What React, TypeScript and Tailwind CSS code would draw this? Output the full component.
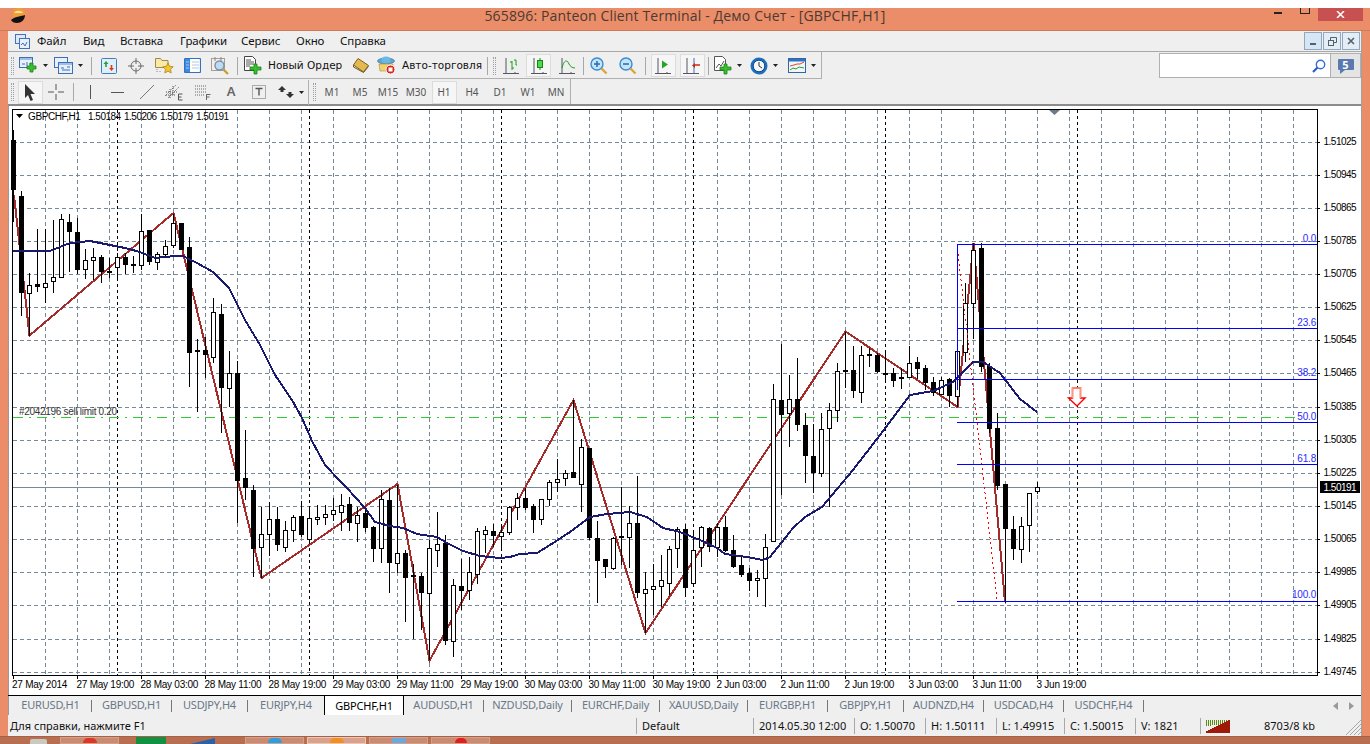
import React from "react";

type C = [number, number, number, number, number];
// high, body top, body bottom, low, bull(1=white)
const candles: C[] = [
[130,140,190,222,0],[191,196,293,316,0],[273,285,293,336,1],[229,284,287,292,0],[229,283,287,303,1],[220,277,281,293,1],[214,219,277,277,1],[214,222,232,272,0],[218,232,270,274,0],[249,260,269,279,1],[248,257,260,280,1],[255,257,272,283,0],[258,271,273,278,0],[253,257,267,280,1],[253,257,265,274,0],[256,264,266,273,0],[214,231,265,270,1],[230,230,262,265,0],[252,254,262,270,1],[240,246,254,257,1],[214,223,245,248,1],[223,223,250,250,0],[237,247,353,387,0],[339,350,352,412,0],[337,350,355,378,0],[298,312,357,363,1],[304,314,388,433,0],[351,373,388,407,1],[361,373,481,523,0],[430,478,488,500,0],[485,490,549,577,0],[507,534,547,578,1],[502,519,534,556,1],[507,519,545,551,0],[521,530,547,552,1],[515,517,530,542,1],[501,516,535,537,0],[509,518,539,543,1],[505,517,519,525,1],[505,514,517,525,1],[498,510,514,521,1],[494,505,512,531,1],[497,504,523,531,0],[507,515,523,542,1],[507,513,528,532,0],[526,527,549,562,0],[490,499,548,563,1],[488,500,563,593,0],[485,553,563,573,1],[550,553,578,622,0],[564,575,577,639,0],[573,576,593,630,0],[540,548,593,660,1],[512,544,550,567,1],[535,543,641,645,0],[579,585,641,657,1],[559,586,591,610,0],[557,572,590,600,1],[528,531,574,584,1],[526,530,534,553,1],[524,531,536,547,0],[527,532,536,550,1],[506,507,532,535,1],[493,498,507,520,1],[488,498,508,510,0],[504,506,520,533,0],[499,499,519,525,1],[480,482,499,506,1],[459,479,482,492,1],[470,473,478,486,1],[400,472,478,478,0],[439,447,484,512,1],[448,448,538,540,0],[521,538,561,603,0],[559,559,567,578,0],[537,538,568,570,1],[487,536,538,565,0],[506,523,537,568,1],[476,523,593,598,0],[572,589,593,633,1],[564,586,589,615,1],[555,580,586,607,1],[546,549,583,595,1],[527,529,548,568,1],[524,529,588,597,0],[530,550,583,583,1],[526,527,547,567,1],[527,528,547,552,0],[523,527,547,557,1],[516,527,551,552,0],[535,550,567,568,0],[557,565,575,577,0],[568,573,581,591,0],[570,578,580,597,1],[534,547,578,607,1],[384,399,541,541,1],[344,400,415,495,0],[375,399,413,447,1],[358,399,425,431,0],[413,425,456,483,0],[424,456,473,493,0],[413,429,473,477,1],[403,410,428,507,1],[363,371,410,422,1],[332,370,372,388,0],[346,370,391,398,0],[346,355,392,403,1],[348,354,356,367,0],[353,355,372,373,0],[353,373,374,383,0],[368,373,381,387,0],[368,377,379,389,0],[346,363,377,377,1],[357,362,369,379,0],[365,368,383,390,0],[377,382,393,396,0],[377,380,394,394,1],[378,379,396,407,0],[328,351,396,407,1],[283,303,352,362,1],[243,250,303,339,1],[243,248,367,372,0],[363,366,429,433,0],[413,428,486,490,0],[484,484,529,603,0],[516,529,549,560,0],[517,526,549,563,1],[493,493,525,552,1],[482,487,491,494,1]
];
const zig = "14,195 29.5,335.5 173.5,213 261.5,578 397.5,484 429.5,660.5 573.5,400 645.5,633 845.5,331.5 957.5,407 973.5,243 1005,602";
const ma = "13,251 50,251 60,247 70,243 90,241 110,245 125,248 140,252 155,258 175,256 183,256 197,263 213,272 229,288 245,320 260,345 275,375 292,400 302,418 312,441 325,465 340,481 347,488 365,508 375,522 390,526 403,528 417,534 437,537 447,543 463,551 480,556 500,558 510,557 520,554 537,553 550,545 570,532 590,517 607,514 630,512 647,517 663,528 680,532 700,540 717,548 725,554 747,557 763,560 770,557 793,528 805,517 822,507 853,470 880,435 910,395 933,391 953,382 973,362 983,362 1000,373 1020,399 1037,412";
const priceLabels = ["1.51025","1.50945","1.50865","1.50785","1.50705","1.50625","1.50545","1.50465","1.50385","1.50305","1.50225","1.50145","1.50065","1.49985","1.49905","1.49825","1.49745"];
const times = ["27 May 2014","27 May 19:00","28 May 03:00","28 May 11:00","28 May 19:00","29 May 03:00","29 May 11:00","29 May 19:00","30 May 03:00","30 May 11:00","30 May 19:00","2 Jun 03:00","2 Jun 11:00","2 Jun 19:00","3 Jun 03:00","3 Jun 11:00","3 Jun 19:00"];
const fibs: [string, number, number][] = [["0.0",244,243],["23.6",328,326.5],["38.2",379,377],["50.0",422,420.5],["61.8",464,462.5],["100.0",601,598.5]];
const AX = "'Liberation Sans', Arial, sans-serif";

function Chart() {
  const ys = priceLabels.map((_, i) => Math.floor(142 + i * 33.14));
  const vx: number[] = [];
  for (let x = 45; x < 1317; x += 32) vx.push(x);
  const sep: number[] = [];
  for (let x = 117; x < 1100; x += 192) sep.push(x);
  return (
    <svg viewBox="8 106 1353 589" className="block w-[1353px] h-[589px]" style={{ fontFamily: AX }}>
      <g stroke="#778899" strokeWidth="1" strokeDasharray="4 3" shapeRendering="crispEdges">
        {ys.map((y) => <line key={y} x1="13" x2="1317" y1={y + 0.5} y2={y + 0.5} />)}
        {vx.map((x) => <line key={x} x1={x + 0.5} x2={x + 0.5} y1="110" y2="675" />)}
      </g>
      <g stroke="#000" strokeDasharray="3 3" shapeRendering="crispEdges">
        {sep.map((x) => <line key={x} x1={x + 0.5} x2={x + 0.5} y1="110" y2="675" />)}
      </g>
      <line x1="13" x2="1295" y1="417.5" y2="417.5" stroke="#32cd32" strokeDasharray="10 6 2 6" shapeRendering="crispEdges" />
      <line x1="13" x2="1317" y1="487.5" y2="487.5" stroke="#778899" shapeRendering="crispEdges" />
      <polyline points={zig} fill="none" stroke="#a52a2a" strokeWidth="2" shapeRendering="crispEdges" />
      <g shapeRendering="crispEdges">
        {candles.map((c, i) => {
          const x = 13 + 8 * i;
          return (
            <g key={i}>
              <line x1={x + 0.5} x2={x + 0.5} y1={c[0]} y2={c[3]} stroke="#000" />
              {c[4] ? (
                <rect x={x - 1.5} y={c[1] + 0.5} width="4" height={Math.max(c[2] - c[1], 1)} fill="#fff" stroke="#000" />
              ) : (
                <rect x={x - 2} y={c[1]} width="5" height={Math.max(c[2] - c[1], 2)} fill="#000" />
              )}
            </g>
          );
        })}
      </g>
      <polyline points={ma} fill="none" stroke="#191970" strokeWidth="2" shapeRendering="crispEdges" />
      <line x1="957" y1="244" x2="997" y2="600" stroke="#ff0000" strokeDasharray="2 3" shapeRendering="crispEdges" />
      <g stroke="#0000ff" shapeRendering="crispEdges">
        {fibs.map(([l, y]) => <line key={l} x1="957" x2="1317" y1={y + 0.5} y2={y + 0.5} />)}
        <line x1="957.5" x2="957.5" y1="244" y2="390" />
      </g>
      <g fontSize="10" fill="#2a2aff" textAnchor="end" letterSpacing="-0.2">
        {fibs.map(([l, , y]) => <text key={l} x="1316" y={y - 1}>{l}</text>)}
      </g>
      <polygon points="1072.5,388 1080.5,388 1080.5,398 1085,398 1077,406 1068.5,398 1072.5,398" fill="#fff" stroke="#ff0000" strokeWidth="1.4" />
      <polyline points="1072.5,398 1072.5,388 1080.5,388 1080.5,398" fill="none" stroke="#f79a80" strokeWidth="1.4" />
      <polygon points="1049,110 1060,110 1054.5,115" fill="#6b7a8a" />
      <rect x="12.5" y="109.5" width="1305" height="566" fill="none" stroke="#000" shapeRendering="crispEdges" />
      <line x1="8.5" x2="8.5" y1="106" y2="695" stroke="#9a9a9a" shapeRendering="crispEdges" />
      <polygon points="16,114 23,114 19.5,118" fill="#000" />
      <text y="120" fontSize="10" fill="#000" letterSpacing="-0.4">
        <tspan x="28">GBPCHF,H1</tspan>
      </text>
      <g fontSize="10" fill="#000" letterSpacing="-0.5">
        {["1.50184", "1.50206", "1.50179", "1.50191"].map((p, i) => <text key={p} x={88 + 36 * i} y="120">{p}</text>)}
      </g>
      <text x="19" y="415" fontSize="10" fill="#333" letterSpacing="-0.3">#2042196 sell limit 0.20</text>
      <g fontSize="10" fill="#000" letterSpacing="-0.5">
        {priceLabels.map((p, i) => <text key={p} x="1323.5" y={ys[i] + 3}>{p}</text>)}
      </g>
      <g stroke="#000" shapeRendering="crispEdges">
        {ys.map((y) => <line key={y} x1="1317" x2="1320" y1={y + 0.5} y2={y + 0.5} />)}
        {times.map((t, i) => <line key={t} x1={13 + 64 * i + 0.5} x2={13 + 64 * i + 0.5} y1="676" y2="679" />)}
      </g>
      <rect x="1320" y="481" width="40" height="12" fill="#000" />
      <text x="1323.5" y="490.5" fontSize="10" fill="#fff" letterSpacing="-0.5">1.50191</text>
      <g fontSize="10" fill="#000" letterSpacing="-0.25">
        {times.map((t, i) => <text key={t} x={i === 0 ? 12 : 12.5 + 64 * i} y="688">{t}</text>)}
      </g>
    </svg>
  );
}

const Arrow = () => (
  <svg width="5" height="3" viewBox="0 0 5 3" className="ml-[5px]"><polygon points="0,0 5,0 2.5,3" fill="#222" /></svg>
);
const Grip = () => (
  <div className="w-[3px] h-[18px] border-x border-dotted border-[#a0a0a0] mx-auto" />
);
const Sep = () => <div className="w-px h-[18px] bg-[#a8a8a8] mx-auto" />;

function Slot({ w, children, active }: { w: string; children?: React.ReactNode; active?: boolean }) {
  return (
    <div className={`${w} h-full flex items-center justify-center shrink-0`}>
      {active ? (
        <div className="w-[25px] h-[23px] flex items-center justify-center border border-[#dcdcdc] bg-[#f6f6f6]">{children}</div>
      ) : children}
    </div>
  );
}

const WinIcon = ({ plus }: { plus?: boolean }) => (
  <svg width="19" height="17" viewBox="0 0 19 17">
    <rect x="0.5" y="0.5" width="13" height="10" fill="#e8f1fb" stroke="#3d6fb5" />
    <rect x="1" y="1" width="12" height="2" fill="#9cc0ea" />
    <path d="M3 7h3M8 5v4M10 7h2" stroke="#3d6fb5" />
    {plus && <path d="M11 6h3v3h3v3h-3v3h-3v-3H8V9h3z" fill="#36c22e" stroke="#1e7f1a" strokeWidth="0.8" />}
  </svg>
);
const ProfileIcon = () => (
  <svg width="19" height="17" viewBox="0 0 19 17">
    <rect x="0.5" y="0.5" width="13" height="10" fill="#e8f1fb" stroke="#3d6fb5" />
    <rect x="4.5" y="5.5" width="14" height="11" fill="#e8f1fb" stroke="#3d6fb5" />
    <rect x="5" y="6" width="13" height="2" fill="#9cc0ea" />
    <path d="M7 11h3M8 13h8M13 10h3" stroke="#3d6fb5" />
  </svg>
);
const MarketIcon = () => (
  <svg width="16" height="16" viewBox="0 0 16 16">
    <rect x="0.5" y="0.5" width="15" height="15" rx="1" fill="#dfeefb" stroke="#3d7fc0" />
    <path d="M5 3l-2.5 3h1.7v3h1.6V6H7.500z" fill="#2aa12a" />
    <path d="M10.500 13l2.500-3h-1.700V7H9.700v3H8z" fill="#e03a1e" />
  </svg>
);
const CrossIcon = ({ s = 16 }: { s?: number }) => (
  <svg width={s} height={s} viewBox="0 0 16 16" fill="none" stroke="#6a6a6a">
    <circle cx="8" cy="8" r="5" />
    <path d="M8 0v6M8 10v6M0 8h6M10 8h6" />
  </svg>
);
const FolderStar = () => (
  <svg width="19" height="17" viewBox="0 0 19 17">
    <path d="M0.500 1.500h5l1.500 2h6v7h-12.500z" fill="#fbe9a8" stroke="#9c8a4c" />
    <path d="M13 6l1.600 3.300 3.600.5-2.600 2.500.6 3.600-3.200-1.700-3.200 1.700.6-3.600-2.600-2.500 3.600-.5z" fill="#f5c530" stroke="#a88718" strokeWidth="0.8" />
    <path d="M2 12v4M5 14v2" stroke="#888" strokeDasharray="1 1" />
  </svg>
);
const TerminalIcon = () => (
  <svg width="17" height="15" viewBox="0 0 17 15">
    <rect x="0.500" y="0.500" width="16" height="14" rx="1" fill="#fff" stroke="#2f72c4" strokeWidth="1.200" />
    <rect x="1" y="1" width="5" height="13" fill="#3c8ae0" />
    <path d="M8 4h7M8 7h7M8 10h7M2 4h3M2 7h3M2 10h3" stroke="#b4c6dc" />
  </svg>
);
const TesterIcon = () => (
  <svg width="19" height="18" viewBox="0 0 19 18">
    <rect x="0.500" y="1.500" width="13" height="12" fill="#f2eee8" stroke="#a89d9d" />
    <path d="M4 0v4M10 0v4" stroke="#888" />
    <circle cx="8.500" cy="8.500" r="4.500" fill="#bcdcf5" stroke="#7a8fa8" strokeWidth="1.400" />
    <path d="M12 12l5 5" stroke="#c99a30" strokeWidth="2.200" />
  </svg>
);
const NewOrder = () => (
  <svg width="18" height="19" viewBox="0 0 18 19">
    <path d="M0.500.500h8l3 3v11h-11z" fill="#fff" stroke="#444" />
    <path d="M2 4h5M2 6h8M2 8h8M2 10h4" stroke="#555" />
    <path d="M10 8h3v3h4v3h-4v4h-3v-4H6v-3h4z" fill="#36c22e" stroke="#1e7f1a" strokeWidth="0.800" />
  </svg>
);
const Book = () => (
  <svg width="17" height="15" viewBox="0 0 17 15">
    <path d="M6 .500l10.500 7-5 6.500L1.500 7z" fill="#e5b94e" stroke="#7a5f1f" />
    <path d="M1.500 7v2l10 5.500 5-6" fill="none" stroke="#6d5a30" />
  </svg>
);
const AutoIcon = () => (
  <svg width="19" height="19" viewBox="0 0 19 19">
    <ellipse cx="9" cy="5" rx="8.500" ry="3" fill="#5aa7d8" stroke="#31658c" strokeWidth="0.600" />
    <ellipse cx="9" cy="4" rx="4.500" ry="3.500" fill="#6bb7e5" />
    <path d="M2 8h14l-1 7H3z" fill="#f3d36c" stroke="#a88a30" strokeWidth="0.600" />
    <circle cx="13.500" cy="13.500" r="4.500" fill="#d82420" stroke="#fff" />
    <rect x="11.500" y="11.500" width="4" height="4" fill="#fff" />
  </svg>
);
const Axes = () => <path d="M3 1v16M0 16.500h16M12 16v-1" stroke="#556" fill="none" />;
const BarsIcon = () => (
  <svg width="16" height="18" viewBox="0 0 16 18"><Axes />
    <path d="M9 13V5h-2M9 5v-1M9 11h2M13 8V3h-2M13 8h1" stroke="#16a016" fill="none" />
  </svg>
);
const CandleIcon = () => (
  <svg width="16" height="18" viewBox="0 0 16 18"><Axes />
    <path d="M9 1v12" stroke="#128a12" /><rect x="6.500" y="3.500" width="5" height="7" fill="#52d652" stroke="#128a12" />
  </svg>
);
const LineIcon = () => (
  <svg width="16" height="18" viewBox="0 0 16 18"><Axes />
    <path d="M3 11C5 3 8 2 10 7c1 2 3 4 6 4" stroke="#16a016" fill="none" />
  </svg>
);
const Mag = ({ minus }: { minus?: boolean }) => (
  <svg width="18" height="18" viewBox="0 0 18 18">
    <circle cx="7" cy="7" r="6" fill="#c4e4fa" stroke="#3d8ad0" strokeWidth="1.400" />
    <path d="M4 7h6" stroke="#2a72b8" strokeWidth="1.600" />
    {!minus && <path d="M7 4v6" stroke="#2a72b8" strokeWidth="1.600" />}
    <path d="M11.500 11.500l5 5" stroke="#d8a63c" strokeWidth="2.400" />
  </svg>
);
const AutoScroll = () => (
  <svg width="16" height="18" viewBox="0 0 16 18"><Axes />
    <path d="M7 3.500v8l6-4z" fill="#25a625" />
  </svg>
);
const ShiftIcon = () => (
  <svg width="18" height="18" viewBox="0 0 18 18"><path d="M4 1v16M0 16.500h16" stroke="#556" fill="none" />
    <path d="M11 1v16" stroke="#3d6fb5" /><path d="M17 8l-5 0" stroke="#c82a18" strokeWidth="1.500" /><path d="M12 6l-3 2.500 3 2.500z" fill="#c82a18" />
  </svg>
);
const Indic = () => (
  <svg width="18" height="19" viewBox="0 0 18 19">
    <path d="M.500.500h8l3 3v11h-11z" fill="#fff" stroke="#555" />
    <path d="M2 12l3-4 2 2 3-5" stroke="#555" fill="none" />
    <path d="M10 8h3v3h4v3h-4v4h-3v-4H6v-3h4z" fill="#36c22e" stroke="#1e7f1a" strokeWidth="0.800" />
  </svg>
);
const Clock = () => (
  <svg width="18" height="18" viewBox="0 0 18 18">
    <circle cx="9" cy="9" r="8.500" fill="#1f6fc0" />
    <circle cx="9" cy="9" r="5.800" fill="#f6f6f6" stroke="#0d4a8a" />
    <path d="M9 5v4l3 2" stroke="#333" fill="none" />
  </svg>
);
const TemplateIcon = () => (
  <svg width="18" height="15" viewBox="0 0 18 15">
    <rect x="0.500" y="0.500" width="17" height="14" fill="#f2f6fa" stroke="#2f66a8" />
    <rect x="1" y="1" width="16" height="2.500" fill="#2f72c4" />
    <path d="M2 8l4-1 3-1 3 0 4-2" stroke="#d8482a" fill="none" /><path d="M2 12l3-2 3 1 3-2 5 1" stroke="#2aa12a" fill="none" />
  </svg>
);
const CursorIcon = () => (
  <svg width="12" height="17" viewBox="0 0 12 17"><path d="M1 0l10 10H6.500l2.500 6-2.500 1-2.500-6L1 14z" fill="#333" /></svg>
);
const Cross2 = () => (
  <svg width="16" height="16" viewBox="0 0 16 16" stroke="#555"><path d="M8 0v6M8 10v6M0 8h6M10 8h6" /></svg>
);
const VLine = () => <svg width="3" height="14" viewBox="0 0 3 14"><path d="M1.500 0v14" stroke="#555" /></svg>;
const HLine = () => <svg width="13" height="3" viewBox="0 0 13 3"><path d="M0 1.500h13" stroke="#555" /></svg>;
const TLine = () => <svg width="14" height="14" viewBox="0 0 14 14"><path d="M0 14L14 0" stroke="#777" /></svg>;
const Channel = () => (
  <svg width="18" height="18" viewBox="0 0 18 18" stroke="#555" fill="none">
    <path d="M0 13L11 2M3 15L14 4M1 9h12M1 12h10M5 15V6M8 12V3" strokeDasharray="1 1" />
    <path d="M13.500 11v6h4M13.500 11h4M13.500 14h3" strokeWidth="1" />
  </svg>
);
const FibIcon = () => (
  <svg width="16" height="15" viewBox="0 0 16 15" stroke="#666" fill="none">
    <path d="M0 1h12M0 4h12M0 7h12M0 10h10" strokeDasharray="1 1" />
    <path d="M11.500 9v6M11.500 9.500h4M11.500 12h3" />
  </svg>
);
const TBox = () => (
  <svg width="14" height="14" viewBox="0 0 14 14" fill="none">
    <rect x="0.500" y="0.500" width="13" height="13" stroke="#666" strokeDasharray="1 1" />
    <path d="M3.500 3.500h7M7 3.500v7" stroke="#555" strokeWidth="1.400" />
  </svg>
);
const Arrows = () => (
  <svg width="16" height="12" viewBox="0 0 16 12">
    <path d="M4 0l4 4H5.500v2h-3V4H0z" fill="#333" />
    <path d="M12 12l-4-4h2.500V6h3v2H16z" fill="#333" />
  </svg>
);

const tabs: [string, string, boolean?][] = [
  ["EURUSD,H1", "w-[82px]"], ["GBPUSD,H1", "w-[80px]"], ["USDJPY,H4", "w-[76px]"], ["EURJPY,H4", "w-[76px]"],
  ["GBPCHF,H1", "w-[80px]", true], ["AUDUSD,H1", "w-[80px]"], ["NZDUSD,Daily", "w-[88px]"], ["EURCHF,Daily", "w-[88px]"],
  ["XAUUSD,Daily", "w-[88px]"], ["EURGBP,H1", "w-[80px]"], ["GBPJPY,H1", "w-[76px]"], ["AUDNZD,H4", "w-[80px]"],
  ["USDCAD,H4", "w-[80px]"], ["USDCHF,H4", "w-[80px]"],
];
const status: [string, string][] = [
  ["Default", "w-[117px]"], ["2014.05.30 12:00", "w-[101px]"], ["O: 1.50070", "w-[71px]"], ["H: 1.50111", "w-[71px]"],
  ["L: 1.49915", "w-[68px]"], ["C: 1.50015", "w-[71px]"], ["V: 1821", "w-[65px]"],
];
const tfs = ["M1", "M5", "M15", "M30", "H1", "H4", "D1", "W1", "MN"];
const menus: [string, string][] = [
  ["Файл", "w-[46px]"], ["Вид", "w-[37px]"], ["Вставка", "w-[60px]"], ["Графики", "w-[61px]"], ["Сервис", "w-[55px]"], ["Окно", "w-[44px]"], ["Справка", "w-[60px]"],
];

export default function App() {
  return (
    <div className="w-[1370px] h-[744px] flex flex-col overflow-hidden bg-[#ea8d68] text-[11px] text-[#111]" style={{ fontFamily: "'Noto Sans', Tahoma, sans-serif" }}>
      <div className="h-2 bg-white shrink-0" />
      {/* title bar */}
      <div className="relative h-[23px] shrink-0 flex items-start justify-center border-b border-[#cd7a58]">
        <svg width="15" height="15" viewBox="0 0 15 15" className="absolute left-[11px] top-0">
          <path d="M2 9C1 3 4 0 8 0s6 3 6 7z" fill="#f0a030" />
          <path d="M3 5c2-3 7-3 9 0z" fill="#f8e0b0" />
          <path d="M0 12c3-3 11-4 14-5 0 5-4 8-8 8-3 0-5-1-6-3z" fill="#111" />
        </svg>
        <span className="text-[14px] leading-[16px] text-[#4a3a34] tracking-[0.15px]" style={{ fontFamily: "'Open Sans', 'Noto Sans', sans-serif" }}>565896: Panteon Client Terminal - Демо Счет - [GBPCHF,H1]</span>
        <div className="absolute right-[7px] top-0 flex items-start">
          <div className="w-[8px] h-[2px] bg-[#222] mt-[4px] mr-[18px]" />
          <div className="w-[10px] h-[6px] border border-[#222] border-t-0 mr-[8px]" />
          <div className="w-[45px] h-[13px] bg-[#c75050] flex items-center justify-center">
            <svg width="9" height="7" viewBox="0 0 9 7"><path d="M1 0l7 7M8 0L1 7" stroke="#fff" strokeWidth="1.500" /></svg>
          </div>
        </div>
      </div>
      <div className="flex flex-1 min-h-0">
        <div className="w-2 shrink-0" />
        <div className="w-[1354px] flex flex-col bg-[#efefef] border-r border-[#a0a0a0]">
          {/* menu */}
          <div className="h-[21px] shrink-0 flex items-center border-b border-[#a8a8a8] text-[11.5px] tracking-[-0.1px]">
            <div className="w-[29px] flex justify-center">
              <svg width="15" height="15" viewBox="0 0 15 15">
                <rect x="0.500" y="0.500" width="10" height="9" fill="#dce9f8" stroke="#4272b8" />
                <rect x="4.500" y="4.500" width="10" height="10" fill="#e8f1fb" stroke="#4272b8" />
                <path d="M6 11l2-2 2 3 2-4" stroke="#4272b8" fill="none" />
              </svg>
            </div>
            {menus.map(([m, w]) => <span key={m} className={w}>{m}</span>)}
            <div className="ml-auto flex gap-px mr-[1px]">
              {["min", "max", "close"].map((k) => (
                <div key={k} className={`w-[18px] h-[18px] flex items-center justify-center border border-[#93a8bf] ${k === "min" ? "bg-[#d6e6f5]" : "bg-[#e4edf6]"}`}>
                  {k === "min" && <div className="w-[6px] h-[2px] bg-[#50626f] mt-[5px]" />}
                  {k === "max" && (
                    <svg width="9" height="9" viewBox="0 0 9 9" fill="none" stroke="#50626f"><rect x="0.500" y="3.500" width="5" height="5" /><path d="M2.500 3.500v-3h6v5h-3" /></svg>
                  )}
                  {k === "close" && (
                    <svg width="8" height="8" viewBox="0 0 8 8"><path d="M1 1l6 6M7 1L1 7" stroke="#50626f" strokeWidth="1.600" /></svg>
                  )}
                </div>
              ))}
            </div>
          </div>
          {/* toolbar 1 */}
          <div className="h-[27px] shrink-0 flex">
            <div className="w-[814px] flex items-center border-r border-b border-[#b0b0b0] pt-px">
              <Slot w="w-[8px]"><Grip /></Slot>
              <Slot w="w-[34px]"><WinIcon plus /><Arrow /></Slot>
              <Slot w="w-[37px]"><ProfileIcon /><Arrow /></Slot>
              <Slot w="w-[8px]"><Sep /></Slot>
              <Slot w="w-[27px]"><MarketIcon /></Slot>
              <Slot w="w-[28px]"><CrossIcon /></Slot>
              <Slot w="w-[28px]"><FolderStar /></Slot>
              <Slot w="w-[28px]"><TerminalIcon /></Slot>
              <Slot w="w-[28px]"><TesterIcon /></Slot>
              <Slot w="w-[6px]"><Sep /></Slot>
              <Slot w="w-[26px]"><NewOrder /></Slot>
              <Slot w="w-[82px]"><span className="text-[10.5px] whitespace-nowrap pl-[2px] w-full" style={{ fontFamily: "'DejaVu Sans', sans-serif" }}>Новый Ордер</span></Slot>
              <Slot w="w-[24px]"><Book /></Slot>
              <Slot w="w-[28px]"><AutoIcon /></Slot>
              <Slot w="w-[84px]"><span className="text-[10.5px] whitespace-nowrap pl-[2px] w-full" style={{ fontFamily: "'DejaVu Sans', sans-serif" }}>Авто-торговля</span></Slot>
              <Slot w="w-[6px]"><Sep /></Slot>
              <Slot w="w-[8px]"><Grip /></Slot>
              <Slot w="w-[26px]"><BarsIcon /></Slot>
              <Slot w="w-[29px]" active><CandleIcon /></Slot>
              <Slot w="w-[28px]"><LineIcon /></Slot>
              <Slot w="w-[4px]"><Sep /></Slot>
              <Slot w="w-[28px]"><Mag /></Slot>
              <Slot w="w-[29px]"><Mag minus /></Slot>
              <Slot w="w-[6px]"><Sep /></Slot>
              <Slot w="w-[30px]" active><AutoScroll /></Slot>
              <Slot w="w-[28px]" active><ShiftIcon /></Slot>
              <Slot w="w-[4px]"><Sep /></Slot>
              <Slot w="w-[35px]"><Indic /><Arrow /></Slot>
              <Slot w="w-[38px]"><Clock /><Arrow /></Slot>
              <Slot w="w-[38px]"><TemplateIcon /><Arrow /></Slot>
            </div>
            <div className="ml-auto flex h-[25px] mt-[1px]">
              <div className="w-[172px] h-full bg-white border border-[#b0b0b0] flex items-center justify-end pr-[4px]">
                <svg width="14" height="14" viewBox="0 0 14 14" fill="none"><circle cx="8.500" cy="5.500" r="4.200" stroke="#3a6fd8" strokeWidth="1.400" /><path d="M5.500 8.500L1 13" stroke="#2a5cc8" strokeWidth="2.200" /></svg>
              </div>
              <div className="w-[30px] h-full bg-[#e4e4e4] border border-l-0 border-[#b0b0b0] flex items-center justify-center">
                <div className="relative w-[16px] h-[11px] bg-[#5a79b0] rounded-[1px] mb-[2px] flex items-center justify-center text-white text-[11px] font-bold leading-none">
                  5
                  <svg width="5" height="4" viewBox="0 0 5 4" className="absolute left-[2px] top-[11px]"><polygon points="0,0 5,0 0,4" fill="#5a79b0" /></svg>
                </div>
              </div>
            </div>
          </div>
          {/* toolbar 2 */}
          <div className="h-[27px] shrink-0 flex border-b-2 border-[#8c8c8c]">
            <div className="w-[563px] flex items-center border-r border-[#b0b0b0] pt-px">
              <Slot w="w-[8px]"><Grip /></Slot>
              <Slot w="w-[28px]" active><CursorIcon /></Slot>
              <Slot w="w-[24px]"><Cross2 /></Slot>
              <Slot w="w-[10px]"><Sep /></Slot>
              <Slot w="w-[24px]"><VLine /></Slot>
              <Slot w="w-[31px]"><HLine /></Slot>
              <Slot w="w-[28px]"><TLine /></Slot>
              <Slot w="w-[26px]"><Channel /></Slot>
              <Slot w="w-[32px]"><FibIcon /></Slot>
              <Slot w="w-[24px]"><span className="text-[#666] text-[13px] font-semibold">A</span></Slot>
              <Slot w="w-[32px]"><TBox /></Slot>
              <Slot w="w-[31px]"><Arrows /><Arrow /></Slot>
              <Slot w="w-[5px]"><div className="w-px h-[25px] bg-[#b0b0b0]" /></Slot>
              <Slot w="w-[7px]"><Grip /></Slot>
              {tfs.map((t) => (
                <div key={t} className="w-[28px] h-full flex items-center justify-center text-[10px] text-[#555]">
                  {t === "H1" ? <div className="w-[25px] h-[23px] flex items-center justify-center border border-[#dcdcdc] bg-[#f6f6f6]">{t}</div> : t}
                </div>
              ))}
            </div>
          </div>
          {/* chart */}
          <div className="h-[589px] shrink-0 bg-white"><Chart /></div>
          {/* tabs */}
          <div className="h-[21px] shrink-0 flex items-start border-t border-black tracking-[-0.2px]">
            <div className="w-[2px] h-[19px] border-l border-[#9a9a9a]" />
            {tabs.map(([t, w, act]) =>
              act ? (
                <div key={t} className={`${w} h-[20px] -mt-px pt-px flex items-center justify-center bg-white border-x border-t border-black border-b-0 text-black`}>{t}</div>
              ) : (
                <div key={t} className={`${w} h-[19px] flex items-center justify-center text-[#6a7787]`}>
                  <span className="flex-1 text-center">{t}</span>
                  {!["EURJPY,H4"].includes(t) && <span className="w-px h-[12px] bg-[#777]" />}
                </div>
              )
            )}
            <div className="ml-auto flex items-center gap-[11px] h-[19px] mr-[6px]">
              <svg width="6" height="8" viewBox="0 0 6 8"><polygon points="6,0 6,8 1,4" fill="#9a9a9a" /></svg>
              <svg width="6" height="8" viewBox="0 0 6 8"><polygon points="0,0 0,8 5,4" fill="#9a9a9a" /></svg>
            </div>
          </div>
          {/* status */}
          <div className="relative h-5 flex-1 flex items-center">
            <div className="w-[628px] pl-[2px]">Для справки, нажмите F1</div>
            {status.map(([s, w]) => (
              <div key={s} className={`${w} h-[16px] flex items-center border-l border-[#a8a8a8] pl-[5px] whitespace-nowrap`}>{s}</div>
            ))}
            <div className="flex items-center h-[16px] border-l border-[#a8a8a8] pl-[5px]">
              <svg width="24" height="13" viewBox="0 0 24 13" shapeRendering="crispEdges">
                {[0,1,2,3,4,5,6,7,8,9,10,11].map((i) => (
                  <g key={i}>
                    <rect x={i * 2} y="0" width="1" height={6 - i * 0.2} fill="#5c8a10" />
                    <rect x={i * 2} y={11 - i} width="1.500" height={i + 2} fill="#a01808" />
                  </g>
                ))}
              </svg>
              <span className="ml-[34px]">8703/8 kb</span>
            </div>
            <svg width="15" height="15" viewBox="0 0 15 15" className="absolute right-0 bottom-[1px]" stroke="#a8a8a8">
              <path d="M0 15L15 0M4 15L15 4M8 15l7-7M12 15l3-3" />
            </svg>
          </div>
        </div>
        <div className="flex-1" />
      </div>
      {/* taskbar */}
      <div className="h-2 shrink-0 bg-[#b86e50] border-t border-[#a86044] flex items-end overflow-hidden">
        <div className="w-[30px]" />
        <div className="w-[17px] h-[5px] bg-[#c9c9c0] rounded-t-[2px]" />
        <div className="w-[13px]" />
        <div className="w-[59px] h-[7px] bg-[#c98b72] border border-[#d4a18c] flex justify-center"><div className="w-[14px] h-[5px] bg-[#d83a2a] rounded-t-full" /></div>
        <div className="w-[17px]" />
        <div className="w-[30px] h-[7px] bg-[#119144]" />
        <div className="w-[24px]" />
        <div className="w-[25px] h-[6px] bg-[#2b62a8] [clip-path:polygon(0_100%,100%_0,100%_100%)]" />
        <div className="w-[30px]" />
        <div className="w-[59px] h-[7px] bg-[#c98b72] border border-[#d4a18c] flex justify-center"><div className="w-[14px] h-[5px] bg-[#2aa0e0] rounded-t-full" /></div>
        <div className="w-[3px]" />
        <div className="w-[59px] h-[7px] bg-[#d8a28c] border border-[#ecc7b6] flex justify-center"><div className="w-[14px] h-[5px] bg-[#f09020] rounded-t-full" /></div>
        <div className="w-[3px]" />
        <div className="w-[59px] h-[7px] bg-[#c98b72] border border-[#d4a18c] flex justify-center"><div className="w-[14px] h-[5px] bg-[#6aa8e0]" /></div>
        <div className="w-[3px]" />
        <div className="w-[59px] h-[7px] bg-[#c98b72] border border-[#d4a18c] flex justify-center"><div className="w-[12px] h-[5px] bg-[#e02020] rounded-t-full" /></div>
      </div>
    </div>
  );
}
